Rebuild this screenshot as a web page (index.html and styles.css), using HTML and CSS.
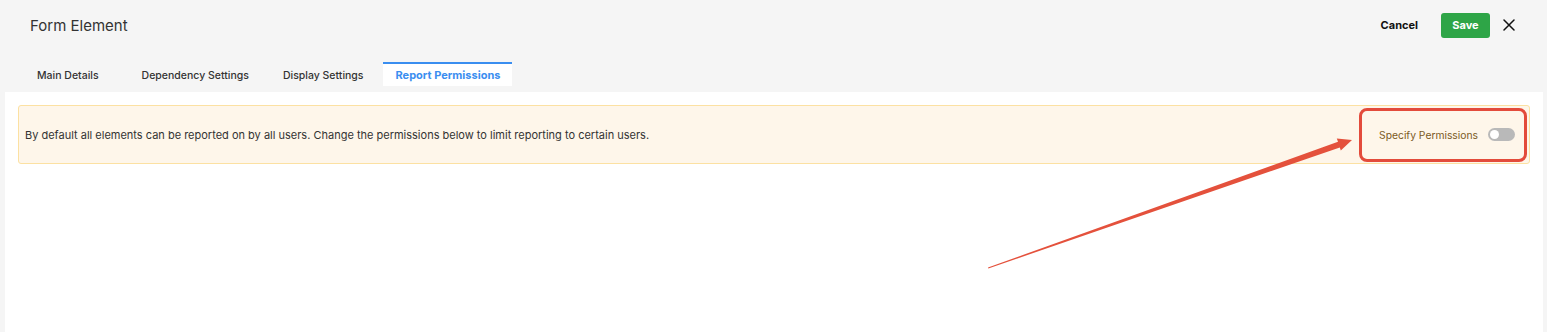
FILE: index.html
```html
<!DOCTYPE html>
<html lang="en">
<head>
<meta charset="utf-8">
<title>Form Element</title>
<link rel="stylesheet" href="styles.css">
</head>
<body>
<div class="page">
  <header class="header">
    <h1 class="title">Form Element</h1>
    <div class="actions">
      <button class="btn-cancel">Cancel</button>
      <button class="btn-save">Save</button>
      <button class="btn-close" aria-label="Close">
        <svg width="12" height="12" viewBox="0 0 12 12"><path d="M1 1L11 11M11 1L1 11" stroke="#111" stroke-width="1.5" fill="none" stroke-linecap="round"/></svg>
      </button>
    </div>
  </header>
  <nav class="tabs">
    <div class="tab tab-main">Main Details</div>
    <div class="tab tab-dep">Dependency Settings</div>
    <div class="tab tab-disp">Display Settings</div>
    <div class="tab tab-active">Report Permissions</div>
  </nav>
  <main class="panel">
    <div class="alert">
      <p class="alert-text">By default all elements can be reported on by all users. Change the permissions below to limit reporting to certain users.</p>
      <div class="specify">
        <span class="specify-label">Specify Permissions</span>
        <span class="toggle"><span class="knob"></span></span>
        <span class="highlight"></span>
      </div>
    </div>
  </main>
</div>
<svg class="arrow" width="1547" height="332" viewBox="0 0 1547 332">
  <polygon fill="#e4513c" points="988,267.5 1338.0,141.8 1336.8,138.6 1352,140 1340.8,150.6 1339.8,147.4 988.3,268.5"/>
</svg>
</body>
</html>
```
FILE: styles.css
```css
* { box-sizing: border-box; }
html, body { margin: 0; padding: 0; }
body {
  background: #f5f5f5;
  font-family: Inter, "Noto Sans", "Liberation Sans", sans-serif;
  color: #333;
  width: 1547px;
  height: 332px;
  overflow: hidden;
  position: relative;
}
.page {
  display: flex;
  flex-direction: column;
  height: 332px;
}
.header {
  display: flex;
  align-items: center;
  justify-content: space-between;
  height: 50px;
  padding: 0 32px 0 30px;
}
.title {
  margin: 0;
  font-size: 15px;
  font-weight: 400;
  color: #333;
}
.actions {
  display: flex;
  align-items: center;
}
.btn-cancel, .btn-save, .btn-close {
  font-family: inherit;
  border: 0;
  background: none;
  padding: 0;
  cursor: pointer;
}
.btn-cancel {
  font-size: 11px;
  font-weight: 700;
  color: #111;
  margin-right: 23px;
}
.btn-save {
  background: #2ea547;
  color: #fff;
  font-size: 11px;
  font-weight: 700;
  width: 49px;
  height: 25px;
  border-radius: 3px;
  margin-right: 13px;
}
.btn-close {
  width: 12px;
  height: 12px;
  display: flex;
}
.tabs {
  display: flex;
  align-items: flex-end;
  height: 36px;
  padding: 12px 0 0 24px;
}
.tab {
  height: 24px;
  display: flex;
  align-items: center;
  white-space: nowrap;
  font-size: 10.5px;
  font-weight: 500;
  color: #333;
  padding: 0 13px;
  border-top: 2px solid transparent;
}
.tab-dep { margin-left: 17px; }
.tab-disp { margin-left: 8px; }
.tab-active {
  margin-left: 6px;
  padding: 0 12px 0 13px;
  background: #fff;
  color: #3a8ef0;
  font-size: 11px;
  font-weight: 700;
  border-top-color: #3a8ef0;
}
.panel {
  flex: 1;
  margin: 6px 4px 0 5px;
  background: #fff;
  padding: 13px;
}
.alert {
  display: flex;
  align-items: center;
  justify-content: space-between;
  height: 59px;
  background: #fef6ea;
  border: 1px solid #fce1a2;
  border-radius: 3px;
  padding: 0 14px 0 6px;
}
.alert-text {
  margin: 0;
  font-size: 11px;
  color: #333;
}
.specify {
  position: relative;
  display: flex;
  align-items: center;
  height: 50px;
}
.specify-label {
  font-size: 10.3px;
  color: #7b5a1e;
  margin-right: 10px;
}
.toggle {
  width: 27px;
  height: 13px;
  border-radius: 7px;
  background: #b9b9b9;
  display: flex;
  align-items: center;
  padding-left: 2px;
}
.knob {
  width: 9px;
  height: 9px;
  border-radius: 50%;
  background: #fff;
}
.highlight {
  position: absolute;
  left: -20px;
  right: -12px;
  top: -2px;
  bottom: -2px;
  border: 3px solid #e34b3b;
  border-radius: 8px;
  pointer-events: none;
}
.arrow {
  position: absolute;
  left: 0;
  top: 0;
  pointer-events: none;
}
```
